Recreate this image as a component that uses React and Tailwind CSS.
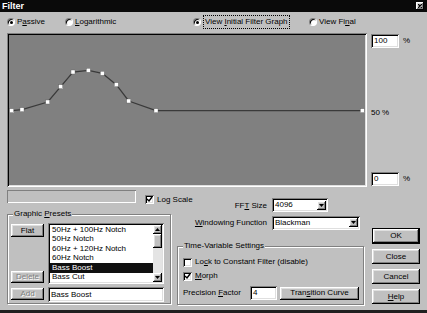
import React from "react";

const sunken =
  "shadow-[inset_1px_1px_0_#808080,inset_-1px_-1px_0_#ffffff,inset_2px_2px_0_#000000,inset_-2px_-2px_0_#dfdfdf]";
const raised =
  "shadow-[inset_-1px_-1px_0_#000000,inset_1px_1px_0_#ffffff,inset_-2px_-2px_0_#808080,inset_2px_2px_0_#dfdfdf]";

const U = ({ children }) => <span className="underline underline-offset-1">{children}</span>;

const Radio = ({ on }) => (
  <div className="w-[8px] h-[8px] rounded-full bg-white border border-t-[#808080] border-l-[#808080] border-b-white border-r-white shadow-[inset_1px_1px_0_#000] flex items-center justify-center shrink-0">
    {on && <div className="w-[3px] h-[3px] rounded-full bg-black" />}
  </div>
);

const Check = ({ on }) => (
  <div className={`w-[9px] h-[9px] bg-white ${sunken} shrink-0 flex items-center justify-center`}>
    {on && (
      <svg width="7" height="7" viewBox="0 0 7 7">
        <path d="M1 3 L3 5 L6 1" stroke="#000" strokeWidth="1.4" fill="none" />
      </svg>
    )}
  </div>
);

const Button = ({ children, disabled, className = "" }) => (
  <div
    className={`bg-[#c0c0c0] ${raised} flex items-center justify-center ${
      disabled ? "text-[#808080] [text-shadow:1px_1px_0_#ffffff]" : ""
    } ${className}`}
  >
    {children}
  </div>
);

const Arrow = ({ up }) => (
  <svg width="5" height="3" viewBox="0 0 5 3">
    <path d={up ? "M2.5 0 L5 3 L0 3 Z" : "M0 0 L5 0 L2.5 3 Z"} fill="#000" />
  </svg>
);

const Dropdown = ({ value, className }) => (
  <div className={`bg-white ${sunken} flex items-center justify-between pl-[3px] pr-[2px] ${className}`}>
    <span>{value}</span>
    <div className={`w-[9px] h-[9px] bg-[#c0c0c0] ${raised} flex items-center justify-center`}>
      <Arrow />
    </div>
  </div>
);

const Group = ({ label, className, children }) => (
  <div className={`relative border border-[#808080] shadow-[1px_1px_0_#ffffff,inset_1px_1px_0_#ffffff] ${className}`}>
    <span className="absolute left-[5px] top-[-5px] bg-[#c0c0c0] px-[1px]">{label}</span>
    {children}
  </div>
);

const pts = [
  [2.7, 75.7], [13, 74.7], [38.7, 67], [51.7, 51.7], [64, 37], [79.3, 35.3],
  [93.3, 38.3], [107.3, 49.7], [119.7, 66], [147, 75.7], [353.3, 75.7],
];

const presets = [
  "50Hz + 100Hz Notch",
  "50Hz Notch",
  "60Hz + 120Hz Notch",
  "60Hz Notch",
  "Bass Boost",
  "Bass Cut",
];

export default function App() {
  return (
    <div className="w-[427px] h-[313px] bg-[#c0c0c0] font-['Liberation_Sans',Arial,sans-serif] text-[8px] leading-none text-black flex flex-col overflow-hidden border-b-[3px] border-[#202020]">
      {/* title bar */}
      <div className="h-[12px] bg-[#0a0a0a] flex items-center justify-between pl-[2px] pr-[3px] shrink-0">
        <span className="text-white font-bold text-[9px]">Filter</span>
        <div className={`w-[8px] h-[8px] bg-[#c0c0c0] ${raised} flex items-center justify-center`}>
          <svg width="4" height="4" viewBox="0 0 4 4">
            <path d="M0 0 L4 4 M4 0 L0 4" stroke="#000" strokeWidth="1.2" />
          </svg>
        </div>
      </div>

      {/* mode radios */}
      <div className="h-[20px] flex items-center pl-[7px] shrink-0">
        <div className="w-[58px] flex items-center gap-[2px]">
          <Radio on />
          <span>P<U>a</U>ssive</span>
        </div>
        <div className="w-[128px] flex items-center gap-[2px]">
          <Radio />
          <span><U>L</U>ogarithmic</span>
        </div>
        <div className="w-[116px] flex items-center gap-[2px]">
          <Radio on />
          <span className="border border-dotted border-black px-[1px] py-[2px]">View <U>I</U>nitial Filter Graph</span>
        </div>
        <div className="flex items-center gap-[2px]">
          <Radio />
          <span>View Fi<U>n</U>al</span>
        </div>
      </div>

      {/* graph row */}
      <div className="flex pl-[7px] mt-[1px] shrink-0">
        <div className={`w-[360px] h-[154px] bg-[#808080] ${sunken} p-[2px]`}>
          <svg width="356" height="150" viewBox="0 0 356 150">
            <polyline
              points={pts.map((p) => p.join(",")).join(" ")}
              fill="none"
              stroke="#3a3a3a"
              strokeWidth="1.3"
            />
            {pts.map(([x, y], i) => (
              <rect key={i} x={x - 2} y={y - 2} width="4" height="4" fill="#ffffff" stroke="#606060" strokeWidth="0.4" />
            ))}
          </svg>
        </div>
        <div className="ml-[4px] flex flex-col justify-between py-[1px] h-[154px]">
          <div className="flex items-center gap-[4px]">
            <div className={`w-[28px] h-[14px] bg-white ${sunken} flex items-center pl-[3px]`}>100</div>
            <span>%</span>
          </div>
          <span className="mt-[6px]">50 %</span>
          <div className="flex items-center gap-[4px]">
            <div className={`w-[28px] h-[14px] bg-white ${sunken} flex items-center pl-[3px]`}>0</div>
            <span>%</span>
          </div>
        </div>
      </div>

      {/* lower area */}
      <div className="flex pl-[7px] shrink-0">
        {/* left */}
        <div className="w-[138px] flex flex-col">
          <div className="mt-[3px] w-[129px] h-[13px] shadow-[inset_1px_1px_0_#808080,inset_-1px_-1px_0_#ffffff]" />
          <Group label={<span>Graphic <U>P</U>resets</span>} className="mt-[11px] w-[164px] h-[90px] shrink-0">
            <div className="flex pl-[3px] pt-[8px]">
              <div className="w-[33px] flex flex-col">
                <Button className="h-[13px] mt-[1px]">Flat</Button>
                <Button disabled className="h-[12px] mt-[34px]">Delete</Button>
                <Button disabled className="h-[12px] mt-[5px]">Add</Button>
              </div>
              <div className="ml-[4px] w-[116px] flex flex-col">
                <div className={`h-[61px] bg-white ${sunken} p-[2px] flex`}>
                  <div className="flex-1 flex flex-col text-[8px]">
                    {presets.map((p) => (
                      <div
                        key={p}
                        className={`h-[9.6px] flex items-center pl-[2px] ${
                          p === "Bass Boost" ? "bg-[#101010] text-white" : ""
                        }`}
                      >
                        {p}
                      </div>
                    ))}
                  </div>
                  <div className="w-[9px] flex flex-col bg-[#e4e4e4]">
                    <div className={`h-[9px] bg-[#c0c0c0] ${raised} flex items-center justify-center`}>
                      <Arrow up />
                    </div>
                    <div className={`h-[14px] bg-[#c0c0c0] ${raised}`} />
                    <div className="flex-1" />
                    <div className={`h-[9px] bg-[#c0c0c0] ${raised} flex items-center justify-center`}>
                      <Arrow />
                    </div>
                  </div>
                </div>
                <div className={`mt-[3px] h-[15px] bg-white ${sunken} flex items-center pl-[3px]`}>Bass Boost</div>
              </div>
            </div>
          </Group>
        </div>

        {/* middle */}
        <div className="w-[219px] flex flex-col">
          <div className="h-[26px] flex items-start">
            <div className="w-[88px] mt-[8px] flex items-center gap-[3px]">
              <Check on />
              <span>Log Scale</span>
            </div>
            <span className="w-[34px] mt-[15px] text-right">FF<U>T</U> Size</span>
            <Dropdown value="4096" className="ml-[5px] mt-[11px] w-[56px] h-[14px]" />
          </div>
          <div className="mt-[3px] h-[13px] flex items-center">
            <span className="w-[122px] text-right"><U>W</U>indowing Function</span>
            <Dropdown value="Blackman" className="ml-[5px] w-[88px] h-[14px]" />
          </div>
          <Group label="Time-Variable Settings" className="mt-[17px] ml-[32px] w-[187px] h-[59px]">
            <div className="flex flex-col pl-[5px] pt-[10px]">
              <div className="h-[10px] flex items-center gap-[3px]">
                <Check />
                <span>Lo<U>c</U>k to Constant Filter (disable)</span>
              </div>
              <div className="mt-[4px] h-[10px] flex items-center gap-[3px]">
                <Check on />
                <span><U>M</U>orph</span>
              </div>
              <div className="mt-[5px] h-[14px] flex items-center">
                <span className="w-[67px]">Precision <U>F</U>actor</span>
                <div className={`w-[27px] h-[14px] bg-white ${sunken} flex items-center pl-[3px]`}>4</div>
                <Button className="ml-[3px] w-[79px] h-[13px]">Tran<U>s</U>ition Curve</Button>
              </div>
            </div>
          </Group>
        </div>

        {/* right buttons */}
        <div className="ml-[8px] w-[48px] mt-[41px] flex flex-col">
          <div className="h-[16px] border border-black">
            <Button className="h-full">OK</Button>
          </div>
          <Button className="h-[15px] mt-[5px]">Close</Button>
          <Button className="h-[15px] mt-[5px]">Cancel</Button>
          <Button className="h-[15px] mt-[5px]"><U>H</U>elp</Button>
        </div>
      </div>
    </div>
  );
}
